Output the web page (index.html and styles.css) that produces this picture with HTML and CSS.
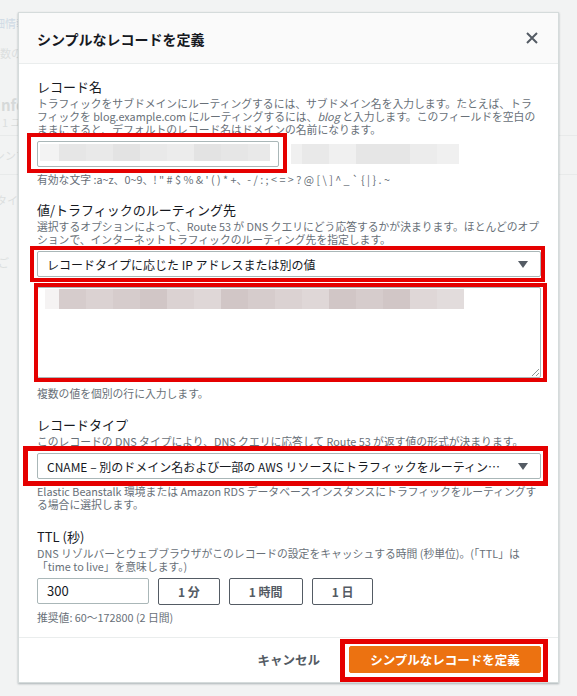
FILE: index.html
```html
<!DOCTYPE html>
<html lang="ja">
<head>
    <meta charset="UTF-8">
    <meta name="viewport" content="width=device-width, initial-scale=1.0">
    <title>シンプルなレコードを定義</title>
    <link rel="stylesheet" href="styles.css">
</head>
<body>
    <div class="page">
        <p class="bg-link">詳細情報</p>
        <p class="bg-text bg-count">複数の</p>
        <h2 class="bg-heading">Info</h2>
        <p class="bg-text bg-sub">1 ユーザー</p>
        <div class="bg-box"><span>シンプル</span></div>
        <p class="bg-text bg-type">タイプ</p>
        <p class="bg-text bg-note">ご</p>
    </div>

    <div class="modal">
        <div class="modal-header">
            <h1 class="modal-title">シンプルなレコードを定義</h1>
            <button class="close" aria-label="閉じる">
                <svg width="12" height="12" viewBox="0 0 12 12"><path d="M1 1L11 11M11 1L1 11" stroke="#545b64" stroke-width="2" fill="none"/></svg>
            </button>
        </div>

        <div class="modal-body">
            <div class="field">
                <div class="label">レコード名</div>
                <div class="desc">
                    <span class="line">トラフィックをサブドメインにルーティングするには、サブドメイン名を入力します。たとえば、トラ</span>
                    <span class="line">フィックを blog.example.com にルーティングするには、<i>blog</i> と入力します。このフィールドを空白の</span>
                    <span class="line">ままにすると、デフォルトのレコード名はドメインの名前になります。</span>
                </div>
                <div class="name-row">
                    <div class="mark mark-name">
                        <div class="input name-input">
                            <span class="px px-s g0"></span><span class="px g1"></span><span class="px g2"></span><span class="px g3"></span><span class="px g2"></span><span class="px g4"></span><span class="px g3"></span><span class="px g1"></span><span class="px px-e g2"></span>
                        </div>
                    </div>
                    <div class="suffix">
                        <span class="px px-xs g5"></span><span class="px g2"></span><span class="px g5"></span><span class="px g1"></span><span class="px g1"></span><span class="px g4"></span><span class="px px-e g5"></span>
                    </div>
                </div>
                <div class="hint"><span class="line">有効な文字 :a~z、0~9、! " # $ % &amp; ' ( ) * +、- / : ; &lt; = &gt; ? @ [ \ ] ^ _ ` { | } . ~</span></div>
            </div>

            <div class="field">
                <div class="label">値/トラフィックのルーティング先</div>
                <div class="desc">
                    <span class="line">選択するオプションによって、Route 53 が DNS クエリにどう応答するかが決まります。ほとんどのオプ</span>
                    <span class="line">ションで、インターネットトラフィックのルーティング先を指定します。</span>
                </div>
                <div class="mark mark-route">
                    <div class="select">
                        <span class="select-text">レコードタイプに応じた IP アドレスまたは別の値</span>
                        <svg class="caret" width="10" height="7" viewBox="0 0 10 7"><path d="M0 0H10L5 7Z" fill="#545b64"/></svg>
                    </div>
                </div>
                <div class="mark mark-value">
                    <div class="textarea">
                        <span class="px px-s r0"></span><span class="px r1"></span><span class="px r2"></span><span class="px r1"></span><span class="px r3"></span><span class="px r2"></span><span class="px r4"></span><span class="px r3"></span><span class="px r1"></span><span class="px r2"></span><span class="px r4"></span><span class="px r3"></span><span class="px r1"></span><span class="px r3"></span><span class="px r4"></span><span class="px r5"></span>
                        <svg class="grip" width="8" height="8" viewBox="0 0 8 8"><path d="M8 1L1 8M8 5L5 8" stroke="#8d9696" stroke-width="1" fill="none"/></svg>
                    </div>
                </div>
                <div class="hint hint-value">複数の値を個別の行に入力します。</div>
            </div>

            <div class="field field-type">
                <div class="label">レコードタイプ</div>
                <div class="desc"><span class="line">このレコードの DNS タイプにより、DNS クエリに応答して Route 53 が返す値の形式が決まります。</span></div>
                <div class="mark mark-type">
                    <div class="select">
                        <span class="select-text">CNAME – 別のドメイン名および一部の AWS リソースにトラフィックをルーティングする</span>
                        <svg class="caret" width="10" height="7" viewBox="0 0 10 7"><path d="M0 0H10L5 7Z" fill="#545b64"/></svg>
                    </div>
                </div>
                <div class="hint">
                    <span class="line">Elastic Beanstalk 環境または Amazon RDS データベースインスタンスにトラフィックをルーティングす</span>
                    <span class="line">る場合に選択します。</span>
                </div>
            </div>

            <div class="field field-ttl">
                <div class="label">TTL (秒)</div>
                <div class="desc">
                    <span class="line">DNS リゾルバーとウェブブラウザがこのレコードの設定をキャッシュする時間 (秒単位)。(「TTL」は</span>
                    <span class="line">「time to live」を意味します。)</span>
                </div>
                <div class="ttl-row">
                    <div class="input ttl-input">300</div>
                    <button class="btn">1 分</button>
                    <button class="btn">1 時間</button>
                    <button class="btn">1 日</button>
                </div>
                <div class="hint">推奨値: 60〜172800 (2 日間)</div>
            </div>
        </div>

        <div class="modal-footer">
            <button class="btn-link">キャンセル</button>
            <div class="mark mark-submit">
                <button class="btn-primary">シンプルなレコードを定義</button>
            </div>
        </div>
    </div>
</body>
</html>
```

FILE: styles.css
```css
body {
    margin: 0;
    background-color: #f2f3f3;
    font-family: "Noto Sans CJK JP", "Noto Sans", sans-serif;
    color: #16191f;
    overflow: hidden;
}

/* page behind the modal, mostly hidden */
.page {
    color: #dcdfdf;
    font-size: 11px;
    line-height: 11px;
    white-space: nowrap;
}

.page p,
.page h2 {
    margin: 0;
}

.bg-link {
    color: #cfdae5;
    padding-top: 18px;
    margin-left: -17px !important;
}

.bg-count {
    margin: 19px 0 0 -11px !important;
}

.bg-heading {
    font-size: 15px;
    line-height: 17px;
    font-weight: bold;
    color: #d6d9d9;
    margin: 37px 0 0 -4px !important;
}

.bg-sub {
    margin: 4px 0 0 2px !important;
}

.bg-box {
    margin-top: 7px;
    margin-left: -6px;
    height: 38px;
    border-top: 1px solid #e8eaea;
    border-bottom: 1px solid #e8eaea;
    display: flex;
    align-items: center;
}

.bg-type {
    margin: 20px 0 0 -4px !important;
}

.bg-note {
    margin: 51px 0 0 -2px !important;
}

/* modal */
.modal {
    position: absolute;
    top: 12px;
    left: 18px;
    width: 541px;
    box-sizing: border-box;
    background-color: #fff;
    border: 1px solid #d5dbdb;
    box-shadow: 0 1px 2px rgba(0, 28, 36, 0.3);
}

.modal-header {
    height: 50px;
    display: flex;
    align-items: center;
    justify-content: space-between;
    padding: 0 20px 0 18px;
    background-color: #fafafa;
    border-bottom: 1px solid #eaeded;
}

.modal-title {
    margin: 0;
    font-size: 14px;
    font-weight: bold;
    line-height: 20px;
    padding-top: 1px;
}

.close {
    border: 0;
    padding: 0;
    background: none;
    width: 12px;
    height: 12px;
    display: flex;
}

.modal-body {
    padding: 15px 17px 13px 18px;
}

.field + .field {
    margin-top: 16px;
}

.field-type {
    margin-top: 17px !important;
}

.field-ttl {
    margin-top: 18px !important;
}

.label {
    font-size: 13px;
    line-height: 16px;
}

.desc,
.hint {
    font-size: 10.8px;
    line-height: 13px;
    color: #687078;
}

.line {
    display: block;
    white-space: nowrap;
}

.desc {
    margin-top: 2px;
    margin-bottom: 5px;
}

.hint {
    margin-top: 6px;
}

.hint-value {
    margin-top: 9px;
}

/* controls */
.input,
.select,
.textarea {
    box-sizing: border-box;
    border: 1px solid #aab7b8;
    border-radius: 2px;
    background-color: #fff;
}

.input {
    height: 26px;
}

.name-row {
    display: flex;
    align-items: center;
    gap: 12px;
}

.name-input {
    width: 242px;
    display: flex;
    align-items: flex-start;
    padding: 2px 0 0 2px;
}

.suffix {
    display: flex;
    height: 20px;
    margin-top: -1px;
}

.px {
    display: block;
    width: 27px;
    height: 17px;
    flex: none;
}

.suffix .px {
    height: 20px;
}

.px-s {
    width: 19px;
}

.px-xs {
    width: 11px;
}

.px-e {
    width: 22px;
}

.g0 { background-color: #f3f3f3; }
.g1 { background-color: #e6e6e6; }
.g2 { background-color: #e9e9e9; }
.g3 { background-color: #e3e3e3; }
.g4 { background-color: #ececec; }
.g5 { background-color: #f0f0f0; }

.select {
    height: 26px;
    display: flex;
    align-items: center;
    padding: 0 12px 0 9px;
    gap: 10px;
}

.select-text {
    flex: 1;
    font-size: 12px;
    white-space: nowrap;
    overflow: hidden;
    text-overflow: ellipsis;
}

.caret {
    flex: none;
}

.mark-route + .mark-value {
    margin-top: 10px;
}

.textarea {
    position: relative;
    height: 91px;
    display: flex;
    align-items: flex-start;
    padding: 1px 0 0 7px;
}

.textarea .px {
    height: 20px;
}

.textarea .px-s {
    width: 14px;
}

.r0 { background-color: #f5f3f3; }
.r1 { background-color: #d6cccc; }
.r2 { background-color: #dbd2d2; }
.r3 { background-color: #d1c6c6; }
.r4 { background-color: #dfd7d7; }
.r5 { background-color: #e2dcdc; }

.grip {
    position: absolute;
    right: 1px;
    bottom: 1px;
}

.ttl-row {
    display: flex;
    align-items: flex-start;
    gap: 9px;
}

.ttl-input {
    width: 112px;
    font-size: 13px;
    line-height: 24px;
    padding-left: 9px;
}

.btn {
    height: 27px;
    padding: 0 19px;
    border: 1px solid #545b64;
    border-radius: 2px;
    background-color: #fff;
    color: #545b64;
    font-family: inherit;
    font-size: 12px;
    font-weight: bold;
}

/* footer */
.modal-footer {
    border-top: 1px solid #eaeded;
    padding: 8px 17px 9px 18px;
    display: flex;
    justify-content: flex-end;
    align-items: center;
    gap: 10px;
}

.btn-link {
    height: 27px;
    padding: 0 19px;
    border: 0;
    background: none;
    color: #545b64;
    font-family: inherit;
    font-size: 12.5px;
    font-weight: bold;
}

.btn-primary {
    display: block;
    width: 192px;
    height: 27px;
    padding: 0;
    border: 1px solid #ec7211;
    border-radius: 2px;
    background-color: #ec7211;
    color: #fff;
    font-family: inherit;
    font-size: 12.5px;
    font-weight: bold;
}

/* red annotation frames */
.mark {
    position: relative;
}

.mark::after {
    content: "";
    position: absolute;
    border: 4px solid #e50000;
    pointer-events: none;
}

.mark-name::after {
    left: -10px;
    right: -8px;
    top: -8px;
    bottom: -6px;
}

.mark-route::after {
    left: -7px;
    right: -4px;
    top: -5px;
    bottom: -5px;
}

.mark-value::after {
    left: -3px;
    right: -6px;
    top: -4px;
    bottom: -4px;
}

.mark-type::after {
    left: -14px;
    right: -7px;
    top: -7px;
    bottom: -7px;
    border-width: 5px;
}

.mark-submit::after {
    left: -9px;
    right: -7px;
    top: -7px;
    bottom: -9px;
    border-width: 5px;
}
```
